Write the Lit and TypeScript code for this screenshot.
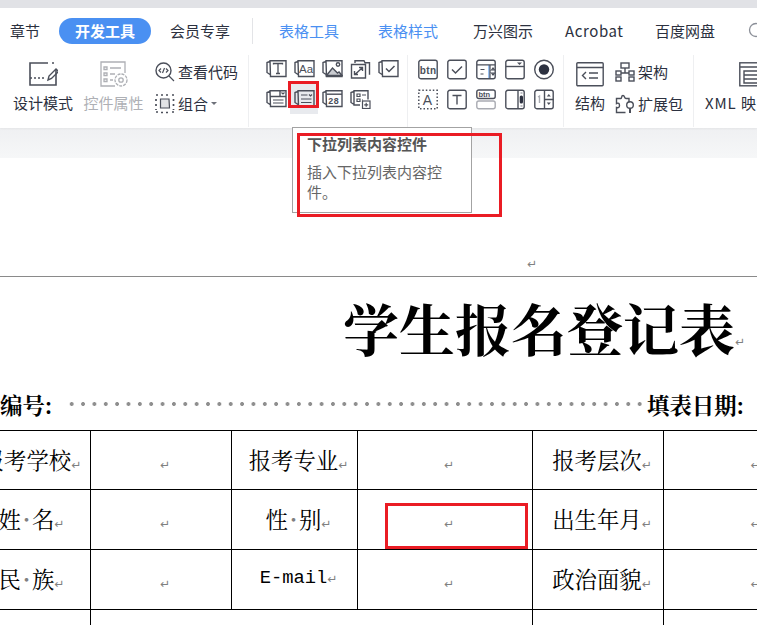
import { LitElement, html, css, svg } from "lit";
import { customElement } from "lit/decorators.js";

const ic = (w: number, h: number, body: unknown) =>
  html`<svg class="ic" width=${w} height=${h} viewBox="0 0 ${w} ${h}" fill="none" stroke="#4b4f5a" stroke-width="1.4">${body}</svg>`;

const back = svg`<path d="M4 1.700h16v15.800H4.500zM4 2.500L1 3.500v10L4 15.500"/>`;
const box = svg`<rect x=".8" y="1.300" width="18.400" height="18.400" rx="2"/>`;

const small: Record<string, unknown> = {
  text: svg`${back}<path d="M7.500 5.500v-1h9v1M12 4.500v10M10 14.500h4" stroke-width="1.300"/>`,
  aa: svg`${back}<text x="5" y="14" font-size="11.500" fill="#4b4f5a" stroke="none" font-family="Liberation Sans">Aa</text>`,
  pic: svg`${back}<path d="M4.500 16.500l6-7.500 5 5 1.500-1 3 3.500z" fill="#c9cbd0"/><circle cx="16" cy="5.500" r="1.700"/>`,
  link: svg`<path d="M5 4V1.700h9l1 2h4.500v12M1.500 5.500h14v13.500h-14z"/><path d="M5 15.500l7-6.500M9 8.500h3.500V12M4.500 12v3.500H8"/>`,
  check: svg`${back}<path d="M8 9.500l3 3 5.500-5.500" stroke-width="1.500"/>`,
  drop: svg`<path d="M4 1.700h16v15.800H4.500zM4 2.500L1 3.500v10L4 15.500M4.500 7.500h15.500M14 1.700v5.800"/><path d="M15.500 3.500l1.500 1.500 1.500-1.500M7 11h10.500M7 14h10.500" stroke-width="1.200"/>`,
  list: svg`${back}<path d="M7 6h6.500M15 5.500l1.500 1.500 1.500-1.500M7 10h10.500M7 13.500h10.500" stroke-width="1.200"/>`,
  date: svg`${back}<path d="M4.500 5.200h15.500"/><text x="6" y="15" font-size="9" font-weight="700" fill="#4b4f5a" stroke="none" font-family="Liberation Mono">28</text>`,
  add: svg`<path d="M18 10.500V1.700H4V16h6M4 2.500L1 3.500v10L4 15.500"/><path d="M7 5h3v2.500H7zM7 10h3v2.500H7zM12 6h4M12 11h1" stroke-width="1.200"/><rect x="12.500" y="12" width="7.500" height="7.500" stroke-width="1.200"/><path d="M16.200 13.800v4M14.200 15.800h4" stroke-width="1.200"/>`,
  btn: svg`${box}<text x="1.800" y="14.500" font-size="10" font-weight="700" fill="#4b4f5a" stroke="none" font-family="Liberation Sans" letter-spacing=".4">btn</text>`,
  chk2: svg`${box}<path d="M5 10.500l3.500 3.500 6.500-6.500" stroke-width="1.500"/>`,
  form: svg`<rect x="12" y="6" width="2" height="13.500" fill="#9cc3f2" stroke="none"/>${box}<path d="M1 5.800h18M14 5.800v14M4.500 10.500h4M4.500 15h3M15.500 11l1.500-2 1.500 2zM15.500 14l1.500 2 1.500-2z" stroke-width="1.200"/>`,
  dd: svg`${box}<path d="M1 7.500h18"/><path d="M12 3.500l2.500 2.500 2.500-2.500z" fill="#4b4f5a" stroke="none"/>`,
  radio: svg`<circle cx="10" cy="10.500" r="9.300"/><circle cx="10" cy="10.500" r="5.200" fill="#2c3140" stroke="none"/>`,
  a: svg`<rect x=".8" y="1.300" width="18.400" height="18.400" stroke-dasharray="1.500 2" stroke-width="1.500"/><text x="4.800" y="16" font-size="14" fill="#4b4f5a" stroke="none" font-family="Liberation Sans">A</text>`,
  t2: svg`${box}<path d="M5.500 6.500h9M10 6.500v9"/>`,
  bt: svg`<rect x=".8" y="1" width="18.400" height="8.500" rx="2"/><text x="2.500" y="8.200" font-size="7.500" font-weight="700" fill="#4b4f5a" stroke="none" font-family="Liberation Sans">btn</text><rect x=".8" y="12" width="18.400" height="7.800" rx="2" stroke="#a9abb2"/>`,
  scr: svg`${box}<path d="M13 1.300v18.400"/><path d="M15.500 4h2M15.500 17h2" stroke="#a9abb2"/><rect x="14.700" y="6.500" width="3.300" height="8" rx="1.500" fill="#2c3140" stroke="none"/>`,
  spin: svg`${box}<path d="M10.500 1.300v18.400M10.500 10.500h9"/><path d="M12.800 7.500l2-2.500 2 2.500zM12.800 13.500l2 2.500 2-2.500z" fill="#4b4f5a" stroke="none"/><path d="M4 8l1.500-1V14" stroke="#a9abb2"/>`,
};

const row1 = ["text", "aa", "pic", "link", "check"];
const row2 = ["drop", "list", "date", "add"];
const row3 = ["btn", "chk2", "form", "dd", "radio"];
const row4 = ["a", "t2", "bt", "scr", "spin"];

const rows = [
  ["报考学校", "", "报考专业", "", "报考层次", ""],
  ["姓·名", "", "性·别", "", "出生年月", ""],
  ["民·族", "", "E-mail", "", "政治面貌", ""],
];

const label = (c: string) => {
  const parts = c.split("·");
  return parts.length === 2 ? html`${parts[0]}<span class="sp">·</span>${parts[1]}` : c;
};

@customElement("app-root")
export class AppRoot extends LitElement {
  static styles = css`
    :host { display: block; position: relative; width: 757px; height: 625px; overflow: hidden; background: #fff;
      font-family: "Noto Sans CJK SC", "Liberation Sans", sans-serif; color: #2c3140; }
    .ic { flex: none; display: block; }
    .top { height: 8px; background: #e1e2e6; }
    .tabs { height: 42px; box-sizing: border-box; padding: 3px 0 0 10px; display: flex; align-items: center; font-size: 15px; white-space: nowrap; }
    .tab { flex: none; }
    .t1 { width: 49px; }
    .pill { width: 92px; height: 26px; line-height: 26px; border-radius: 13px; background: #4a90f2; color: #fff; text-align: center; font-weight: 700; margin-right: 19px; }
    .t3 { width: 82px; border-right: 1px solid #e3e4e7; height: 26px; line-height: 26px; }
    .blue { color: #4a90f2; }
    .t4 { margin-left: 26px; width: 99px; }
    .t5 { width: 95px; }
    .t6 { width: 92px; }
    .t7 { width: 90px; letter-spacing: .6px; }
    .t8 { width: 93px; }
    .ribbon { height: 78px; display: flex; box-shadow: 0 1px 2px rgba(0,0,0,.05); position: relative; white-space: nowrap; font-size: 15px; }
    .sep { flex: none; width: 1px; height: 72px; margin-top: 5px; background: #eeeff1; }
    .dev { flex: none; display: flex; width: 235px; padding-left: 13px; }
    .big { flex: none; display: flex; flex-direction: column; align-items: center; padding-top: 11px; }
    .big span { margin-top: 6px; line-height: 20px; }
    .design { width: 60px; }
    .props { width: 65px; margin-left: 8px; color: #aeb0b5; }
    .side { flex: none; display: flex; flex-direction: column; gap: 11px; padding-top: 11px; }
    .dev .side { margin-left: 9px; }
    .sideitem { display: flex; align-items: center; gap: 3px; height: 21px; }
    .caret { width: 0; height: 0; border: 3px solid transparent; border-top: 3px solid #6d7079; margin-top: 3px; }
    .icons { flex: none; display: grid; grid-auto-rows: 30px; padding-top: 4px; }
    .icons.a { grid-template-columns: repeat(5, 28px); margin: 0 5px 0 13px; }
    .icons.b { grid-template-columns: repeat(5, 29px); margin: 0 5px; }
    .cell { display: flex; align-items: center; justify-content: center; }
    .cell.on { background: #e8eaee; }
    .struct { width: 60px; margin-left: -4px; }
    .ext { margin: 0 9px 0 -5px; width: 69px; }
    .xml { width: 64px; margin-left: 11px; align-items: flex-start; }
    .xml .ic { margin-left: 34px; }
    .xml span { letter-spacing: .9px; }
    .band { height: 30px; background: linear-gradient(#eff0f2, #f6f7f8); }
    .page { height: 118px; border-bottom: 1px solid #8a8a8a; position: relative; }
    .mark { font-family: "DejaVu Sans", sans-serif; font-size: 12px; font-weight: 400; color: #808080; line-height: 1; }
    .pm { position: absolute; left: 527px; top: 100px; }
    .title { margin: 0; height: 81px; padding-left: 343px; font: 700 56px/100px "Noto Serif CJK SC", "Noto Sans CJK SC", serif; color: #000; white-space: nowrap; display: flex; }
    .title .mark { align-self: flex-start; margin-top: 59px; }
    .meta { height: 72px; box-sizing: border-box; padding-top: 19px; display: flex; align-items: center; font: 700 22.400px "Noto Serif CJK SC", "Noto Sans CJK SC", serif; color: #000; white-space: nowrap; }
    .num { flex: none; width: 70px; }
    .dots { flex: none; margin: 0 1px 0 -4px; width: 580px; height: 6px;
      background: radial-gradient(circle, #8f8f8f 1.700px, transparent 2.200px) 0 0 / 11.370px 6px repeat-x; }
    .meta .date { flex: none; }
    table.doc { border-collapse: collapse; table-layout: fixed; width: 869px; margin-left: -30px; color: #000;
      font: 22.400px "Noto Serif CJK SC", "Noto Sans CJK SC", serif; }
    col.c1 { width: 120px; } col.c2 { width: 141px; } col.c3 { width: 126px; }
    col.c4 { width: 175px; } col.c5 { width: 131px; } col.c6 { width: 176px; }
    table.doc td { border: 1px solid #000; height: 56px; padding: 0 0 3px 8px; text-align: center; white-space: nowrap; }
    table.doc tr.first td { height: 55px; }
    table.doc td:first-child { padding-left: 2px; }
    table.doc td.m { font-family: "Liberation Mono", monospace; font-size: 18.800px; }
    .sp { display: inline-block; width: 11px; text-align: center; color: #808080; font-weight: 700; }
    .note { position: absolute; border: 3px solid #ea1c24; box-sizing: border-box; }
    .n1 { left: 288px; top: 81px; width: 31px; height: 27px; }
    .n2 { left: 297px; top: 133px; width: 205px; height: 84px; }
    .n3 { left: 385px; top: 503px; width: 143px; height: 46px; }
    .tip { position: absolute; left: 292px; top: 127px; width: 180px; height: 86px; box-sizing: border-box; border: 1px solid #a3a3a3; background: #fff; padding: 7px 14px; color: #666; }
    .tip b { display: block; font-size: 15px; line-height: 18px; color: #555; }
    .tip p { margin: 9px 0 0; font-size: 15px; line-height: 20px; width: 140px; }
  `;

  render() {
    return html`
      <div class="top"></div>
      <div class="tabs">
        <span class="tab t1">章节</span><span class="tab pill">开发工具</span><span class="tab t3">会员专享</span>
        <span class="tab blue t4">表格工具</span><span class="tab blue t5">表格样式</span><span class="tab t6">万兴图示</span>
        <span class="tab t7">Acrobat</span><span class="tab t8">百度网盘</span>
        <svg class="ic" width="14" height="18" viewBox="0 0 14 18" fill="none" stroke="#8b8f98" stroke-width="1.300"><circle cx="8" cy="8" r="6.500"/></svg>
      </div>
      <div class="ribbon">
        <div class="dev">
          <div class="big design">
            ${ic(30, 26, svg`<path d="M20 2H2v22h26V9" stroke-width="1.600"/><path d="M24 2h4M2 17h16" stroke-dasharray="2 2"/><path d="M20 19l1-4 7-7 2.500 2.500-7 7z"/>`)}
            <span>设计模式</span>
          </div>
          <div class="big props">
            <svg class="ic" width="30" height="26" viewBox="0 0 30 26" fill="none" stroke="#aeb0b5" stroke-width="1.300"><path d="M16 25H2V1h24v11"/><path d="M5 6h3v2.500H5zM5 12h3v2.500H5zM5 18h3v2.500H5zM11 7h11M11 13h5M11 19h3"/><circle cx="22" cy="19" r="6" stroke-dasharray="3 1"/><circle cx="22" cy="19" r="2.200"/></svg>
            <span>控件属性</span>
          </div>
          <div class="side">
            <div class="sideitem">${ic(20, 20, svg`<circle cx="8.500" cy="8.500" r="7.500"/><path d="M14 14l5 5M6 6.500L4 8.500l2 2M11 6.500l2 2-2 2M9.500 6l-2 5" stroke-width="1.200"/>`)}<span>查看代码</span></div>
            <div class="sideitem">${ic(20, 20, svg`<path d="M1 1h2M1 18h2M17 1h2M17 18h2M1 5v2M1 10v2M1 15v1M18.500 5v2M18.500 10v2M18.500 15v1M6 1h2M11 1h2M6 18.500h2M11 18.500h2" stroke-width="1.700"/><path d="M14 5H5.500v9h9z" fill="#e2e3e6" stroke-width="1.200"/>`)}<span>组合</span><i class="caret"></i></div>
          </div>
        </div>
        <div class="sep"></div>
        <div class="icons a">
          ${row1.map((k) => html`<div class="cell">${ic(21, 20, small[k])}</div>`)}
          ${row2.map((k) => html`<div class="cell ${k === "list" ? "on" : ""}">${ic(21, 20, small[k])}</div>`)}
        </div>
        <div class="sep"></div>
        <div class="icons b">
          ${row3.map((k) => html`<div class="cell">${ic(20, 21, small[k])}</div>`)}
          ${row4.map((k) => html`<div class="cell">${ic(20, 21, small[k])}</div>`)}
        </div>
        <div class="sep"></div>
        <div class="big struct">
          ${ic(28, 26, svg`<rect x=".8" y="1.800" width="26.400" height="23" rx="1"/><path d="M1 6.500h26M10 11l-3.500 3.500 3.500 3.500M13 12h9M13 17h9"/>`)}
          <span>结构</span>
        </div>
        <div class="side ext">
          <div class="sideitem">${ic(20, 20, svg`<rect x="6" y="1" width="8" height="5"/><rect x="1" y="9" width="5" height="4"/><rect x="14" y="9" width="5" height="4"/><rect x="1" y="15" width="5" height="4"/><rect x="14" y="15" width="5" height="4"/><path d="M10 6v5M6 11h8"/>`)}<span>架构</span></div>
          <div class="sideitem">${ic(20, 20, svg`<path d="M8 1.500c-2 0-1 3-2 3H1.500v5c2-1 3 0 3 2s-1 2.500-3 2v5h9M8 1.500c2 0 1 3 3 3h3v4"/><circle cx="15" cy="11" r="3.300"/><path d="M15 14v5" stroke-width="2"/>`)}<span>扩展包</span></div>
        </div>
        <div class="sep"></div>
        <div class="big xml">
          ${ic(30, 26, svg`<rect x=".8" y="1.800" width="30" height="23"/><path d="M1 6h28M5 10h24v4H5zM5 18h24v4H5zM5 10v12"/>`)}
          <span>XML 映射</span>
        </div>
      </div>
      <div class="band"></div>
      <div class="page"><span class="mark pm">↵</span></div>
      <h1 class="title">学生报名登记表<span class="mark">↵</span></h1>
      <div class="meta"><span class="num">编号:</span><span class="dots"></span><span class="date">填表日期:</span></div>
      <table class="doc">
        <colgroup><col class="c1"/><col class="c2"/><col class="c3"/><col class="c4"/><col class="c5"/><col class="c6"/></colgroup>
        ${rows.map((r, i) => html`<tr class=${i === 0 ? "first" : ""}>${r.map((c) => html`<td class=${c === "E-mail" ? "m" : ""}>${label(c)}<span class="mark">↵</span></td>`)}</tr>`)}
        <tr><td></td><td colspan="3"></td><td></td><td></td></tr>
      </table>
      <div class="tip"><b>下拉列表内容控件</b><p>插入下拉列表内容控件。</p></div>
      <div class="note n1"></div>
      <div class="note n2"></div>
      <div class="note n3"></div>
    `;
  }
}
